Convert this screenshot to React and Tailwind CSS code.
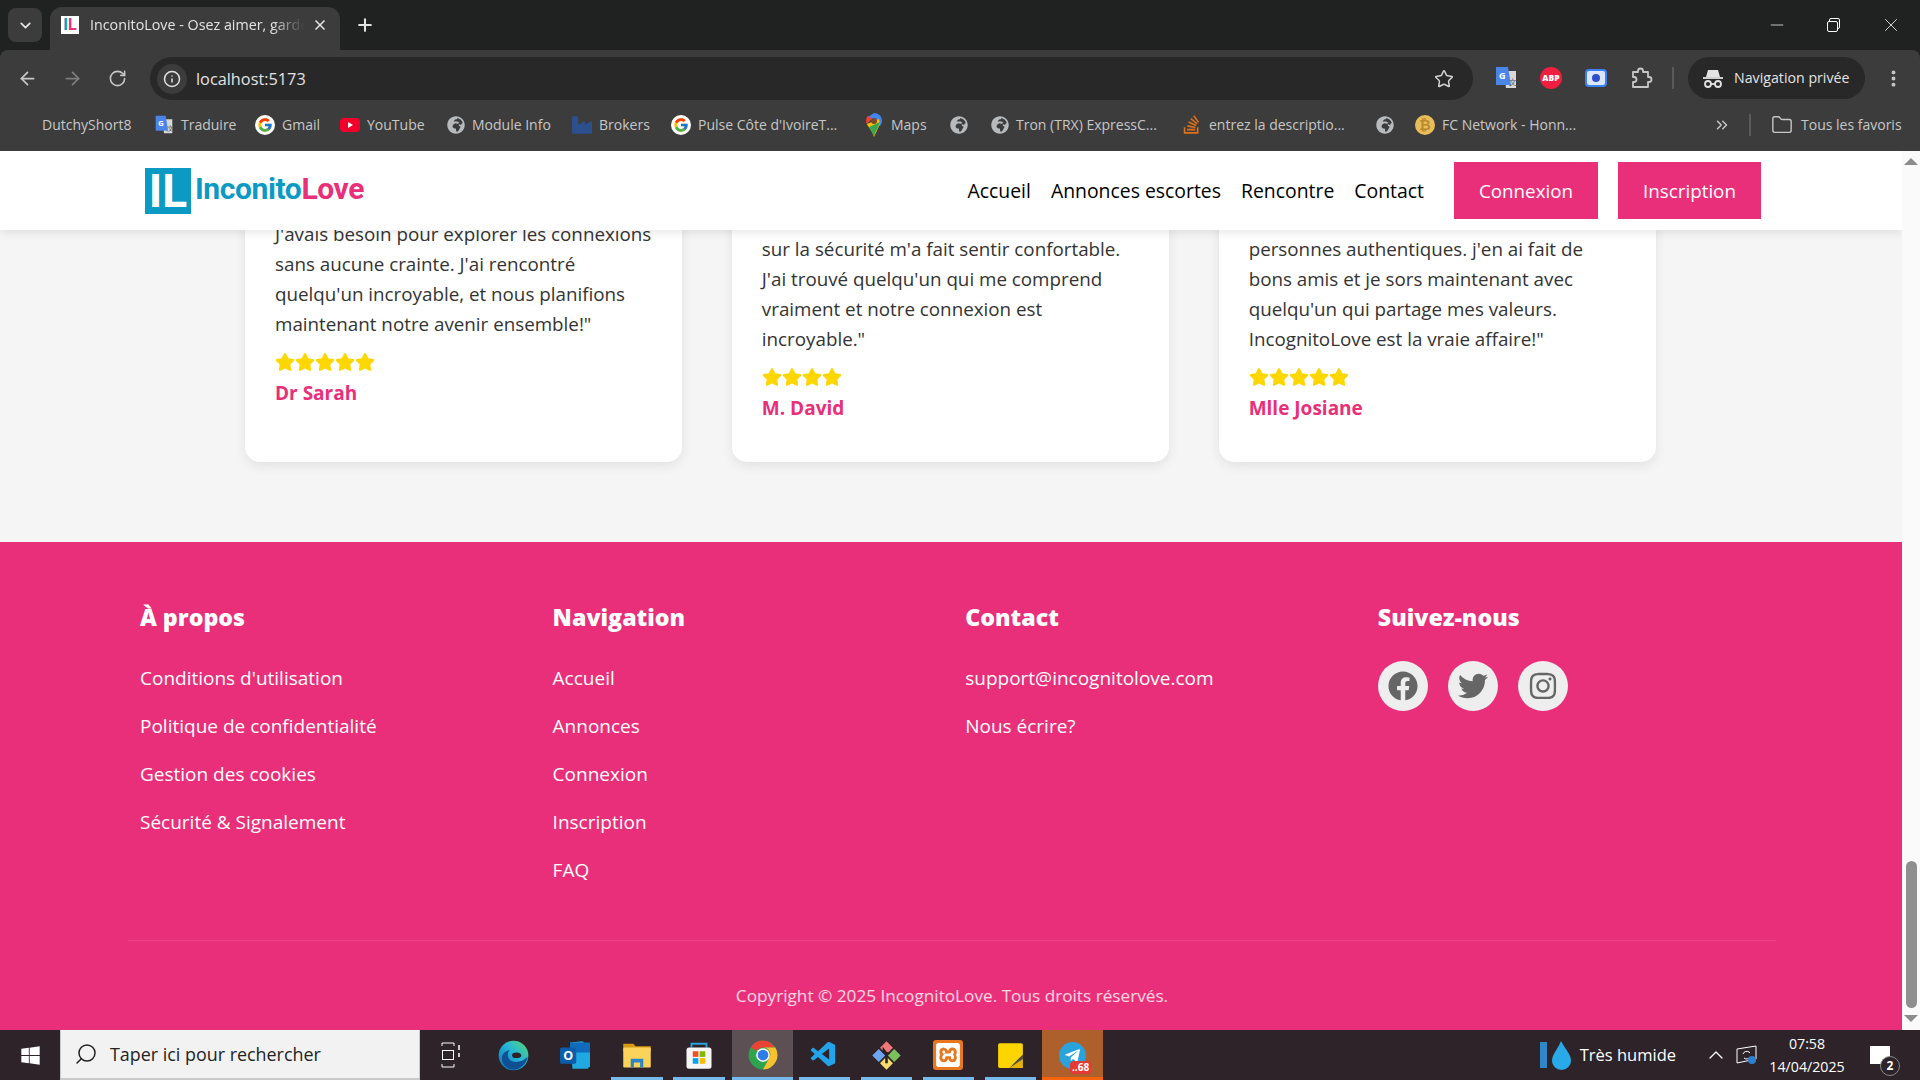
import React from "react";
import {
  ArrowLeft, ArrowRight, RotateCw, Info, X, Plus, ChevronDown, ChevronUp, Star,
  EllipsisVertical, ChevronsRight, Folder, Search, Minus,
} from "lucide-react";
import { FcGoogle } from "react-icons/fc";
import {
  FaFacebook, FaTwitter, FaInstagram, FaStar, FaGlobeAfrica, FaIndustry,
  FaStackOverflow, FaTelegramPlane, FaWindows,
} from "react-icons/fa";
import { SiXampp } from "react-icons/si";
import { VscVscode } from "react-icons/vsc";

const PINK = "bg-[#e92f79]";

// ---- petites icones dessinées ----
const Translate = ({ s = 22 }) => (
  <svg width={s} height={s} viewBox="0 0 24 24">
    <path d="M10 5h12v17H12z" fill="#d8d8d8" />
    <path d="M2 1h12l3 18H2z" fill="#4a85e8" />
    <text x="5" y="13" fontSize="9" fontWeight="700" fill="#fff" fontFamily="Open Sans">G</text>
    <text x="15" y="19" fontSize="8" fill="#555" fontFamily="Open Sans">文</text>
  </svg>
);

const GoogleDot = () => (
  <span className="flex h-[20px] w-[20px] items-center justify-center rounded-full bg-white">
    <FcGoogle size={16} />
  </span>
);

const YoutubeIcon = () => (
  <svg width="20" height="20" viewBox="0 0 20 20">
    <rect x="0" y="3" width="20" height="14" rx="4" fill="#f0002a" />
    <path d="M8 7l5 3-5 3z" fill="#fff" />
  </svg>
);

const BitcoinIcon = () => (
  <span className="flex h-[20px] w-[20px] items-center justify-center rounded-full bg-[#e8bd5a] text-[14px] font-bold leading-none text-[#b98a2c]">
    ₿
  </span>
);

const MapsPin = () => (
  <svg width="20" height="24" viewBox="0 0 20 24">
    <path d="M10 0a8 8 0 0 1 8 8c0 2-1 3.500-2 5L4 4z" fill="#4285f4" />
    <path d="M4 2.500A8 8 0 0 0 2 8c0 1 .3 2 .8 3L8 6z" fill="#ea4335" />
    <path d="M2.800 11 15 6l1 5-6 13c-1-5-5-9-7.200-13z" fill="#fbbc04" />
    <path d="M5 14 16 9c-1 5-5 9-6 15-1-4-3-7-5-10z" fill="#34a853" />
    <circle cx="10" cy="8" r="3" fill="#7a4a20" />
  </svg>
);

const Incognito = () => (
  <svg width="24" height="24" viewBox="0 0 24 24" fill="none" stroke="#e3e3e3" strokeWidth="1.800">
    <path d="M7 4h10l2 7H5z" fill="#e3e3e3" stroke="none" />
    <path d="M2 12h20" />
    <circle cx="7" cy="18" r="3" />
    <circle cx="17" cy="18" r="3" />
    <path d="M10 18h4" />
  </svg>
);

const PuzzleIcon = () => (
  <svg width="24" height="24" viewBox="0 0 24 24" fill="none" stroke="#c7c7c7" strokeWidth="1.800" strokeLinejoin="round">
    <path d="M4 6h5V5a2.500 2.500 0 0 1 5 0v1h5v5h1a2.500 2.500 0 0 1 0 5h-1v5H4v-5h1a2.500 2.500 0 0 0 0-5H4z" />
  </svg>
);

const TaskView = () => (
  <svg width="20" height="26" viewBox="0 0 20 26" fill="none" stroke="#fff" strokeWidth="1">
    <path d="M1 1h12M13 1v3M1 1v3" />
    <rect x="1.500" y="8.500" width="11" height="9" />
    <path d="M1 25h12M13 22v3M1 22v3" />
    <path d="M18 3v5M18 11v4" strokeWidth="1.500" />
  </svg>
);

const NetworkIcon = () => (
  <svg width="22" height="20" viewBox="0 0 22 20" fill="none" stroke="#fff" strokeWidth="1">
    <path d="M1 4 20 1v13L1 18z" />
    <path d="M7 9a4 4 0 0 1 6-2l1 1M14 12a4 4 0 0 1-6 1" />
    <circle cx="16" cy="15" r="4" fill="#2f7fd1" stroke="none" />
  </svg>
);

const ChromeLogo = () => (
  <svg width="30" height="30" viewBox="0 0 24 24">
    <circle cx="12" cy="12" r="11.500" fill="#2ea44f" />
    <path d="M2.470 6.500A11 11 0 0 1 21.530 6.500H12A5.500 5.500 0 0 0 7.240 9.250Z" fill="#ea4335" transform="translate(-.2 -.5)" />
    <path d="M21.800 6A11.500 11.500 0 0 1 12 23.500L16.760 14.750A5.500 5.500 0 0 0 12 6Z" fill="#fbc02d" />
    <circle cx="12" cy="12" r="5.500" fill="#fff" />
    <circle cx="12" cy="12" r="4.300" fill="#2f7be8" />
  </svg>
);

const EdgeLogo = () => (
  <svg width="31" height="31" viewBox="0 0 24 24">
    <defs>
      <linearGradient id="edgeGrad" x1="0" y1="1" x2="1" y2="0">
        <stop offset="0" stopColor="#0c6fb8" />
        <stop offset="0.550" stopColor="#25b5d8" />
        <stop offset="1" stopColor="#5fd86a" />
      </linearGradient>
    </defs>
    <circle cx="12" cy="12" r="11.500" fill="url(#edgeGrad)" />
    <path d="M23 13c-1 6-6 10-11 10-5 0-9-4-9-9 0-3 3-6 6-6-2 2-2 6 1 8 4 2 9 1 13-3z" fill="#0f4f93" />
    <path d="M12 10c3-1 6 0 6 2s-3 2-5 2-3-3-1-4z" fill="#2d2328" />
  </svg>
);

const OutlookLogo = () => (
  <svg width="30" height="30" viewBox="0 0 24 24">
    <path d="M8 2 18 1l6 6v14l-2 2H10z" fill="#20a8e0" />
    <path d="M8 2h16v8H8z" fill="#0f6cbd" />
    <rect x="0" y="6" width="13" height="13" rx="1.500" fill="#0b5cab" />
    <text x="2.500" y="16" fontSize="10" fontWeight="700" fill="#fff" fontFamily="Open Sans">O</text>
  </svg>
);

const ExplorerLogo = () => (
  <svg width="30" height="30" viewBox="0 0 24 24">
    <path d="M1 3h8l2 2h12v4H1z" fill="#d99a13" />
    <rect x="1" y="6" width="22" height="16" rx="1" fill="#fbd35a" />
    <path d="M7 15h10v7h-2.500v-4h-5v4H7z" fill="#2a86c8" />
  </svg>
);

const StoreLogo = () => (
  <svg width="30" height="30" viewBox="0 0 24 24">
    <path d="M6 6V3h12v3" fill="none" stroke="#2aa3e0" strokeWidth="1.500" />
    <rect x="2" y="6" width="20" height="17" rx="2" fill="#f5f5f5" />
    <rect x="7" y="9" width="4.500" height="4.500" fill="#f25022" />
    <rect x="12.500" y="9" width="4.500" height="4.500" fill="#7fba00" />
    <rect x="7" y="14.500" width="4.500" height="4.500" fill="#00a4ef" />
    <rect x="12.500" y="14.500" width="4.500" height="4.500" fill="#ffb900" />
  </svg>
);

const GitLogo = () => (
  <svg width="31" height="31" viewBox="0 0 24 24">
    <path d="M12 1l5 5-5 5-5-5z" fill="#f0787a" />
    <path d="M18 7l5 5-5 5-5-5z" fill="#7cc05c" />
    <path d="M12 13l5 5-5 5-5-5z" fill="#f6dc6e" />
    <path d="M6 7l5 5-5 5-5-5z" fill="#6fa5f0" />
    <path d="M9 5l3 4 3 1-2 2 0 6h-2l0-6-2-3z" fill="#2a2124" />
  </svg>
);

const StickyLogo = () => (
  <svg width="27" height="27" viewBox="0 0 24 24">
    <rect x="1" y="1" width="22" height="22" rx="1.500" fill="#fcd500" />
    <path d="M23 11v12H11z" fill="#4a4a4a" />
    <path d="M23 23H11l12-8z" fill="#e8b200" />
  </svg>
);

// ---- données ----
const globe = <FaGlobeAfrica size={18} className="text-[#b8bbbe]" />;

const bookmarks = [
  { label: "DutchyShort8", w: "w-[91px]", ml: "ml-[42px]" },
  { icon: <Translate s={20} />, label: "Traduire", w: "w-[54px]", ml: "ml-[21px]" },
  { icon: <GoogleDot />, label: "Gmail", w: "w-[38px]", ml: "ml-[20px]" },
  { icon: <YoutubeIcon />, label: "YouTube", w: "w-[59px]", ml: "ml-[20px]" },
  { icon: globe, label: "Module Info", w: "w-[81px]", ml: "ml-[21px]" },
  { icon: <FaIndustry size={20} className="text-[#2e4f8e]" />, label: "Brokers", w: "w-[50px]", ml: "ml-[19px]" },
  { icon: <GoogleDot />, label: "Pulse Côte d'IvoireT...", w: "w-[143px]", ml: "ml-[22px]" },
  { icon: <MapsPin />, label: "Maps", w: "w-[37px]", ml: "ml-[23px]" },
  { icon: globe, label: "", w: "w-0", ml: "ml-[22px]" },
  { icon: globe, label: "Tron (TRX) ExpressC...", w: "w-[142px]", ml: "ml-[23px]" },
  { icon: <FaStackOverflow size={21} className="text-[#e0701a]" />, label: "entrez la descriptio...", w: "w-[138px]", ml: "ml-[23px]" },
  { icon: globe, label: "", w: "w-0", ml: "ml-[29px]" },
  { icon: <BitcoinIcon />, label: "FC Network - Honn...", w: "w-[140px]", ml: "ml-[21px]" },
];

const testimonials = [
  {
    lines: [
      "J'avais besoin pour explorer les connexions",
      "sans aucune crainte. J'ai rencontré",
      "quelqu'un incroyable, et nous planifions",
      "maintenant notre avenir ensemble!\"",
    ],
    stars: 5,
    name: "Dr Sarah",
  },
  {
    lines: [
      "l'engagement de la plateforme",
      "sur la sécurité m'a fait sentir confortable.",
      "J'ai trouvé quelqu'un qui me comprend",
      "vraiment et notre connexion est",
      "incroyable.\"",
    ],
    stars: 4,
    name: "M. David",
  },
  {
    lines: [
      "j'ai pu enfin rencontrer de vraies",
      "personnes authentiques. j'en ai fait de",
      "bons amis et je sors maintenant avec",
      "quelqu'un qui partage mes valeurs.",
      "IncognitoLove est la vraie affaire!\"",
    ],
    stars: 5,
    name: "Mlle Josiane",
  },
];

const footerCols = [
  { title: "À propos", links: ["Conditions d'utilisation", "Politique de confidentialité", "Gestion des cookies", "Sécurité & Signalement"] },
  { title: "Navigation", links: ["Accueil", "Annonces", "Connexion", "Inscription", "FAQ"] },
  { title: "Contact", links: ["support@incognitolove.com", "Nous écrire?"] },
];

const taskIcons = [
  { icon: <EdgeLogo />, bar: false },
  { icon: <OutlookLogo />, bar: false },
  { icon: <ExplorerLogo />, bar: true },
  { icon: <StoreLogo />, bar: true },
];

const taskIcons2 = [
  { icon: <VscVscode size={30} className="text-[#23a3ea]" /> },
  { icon: <GitLogo /> },
  {
    icon: (
      <span className="flex h-[30px] w-[30px] items-center justify-center rounded-[3px] bg-[#e8781f]">
        <SiXampp size={24} className="text-white" />
      </span>
    ),
  },
  { icon: <StickyLogo /> },
];

function BrowserChrome() {
  return (
    <div className="bg-[#202221] font-['Open_Sans',sans-serif] text-[#e3e3e3]">
      {/* onglets */}
      <div className="flex h-[50px] items-start">
        <div className="ml-[8px] mt-[8px] flex h-[34px] w-[34px] items-center justify-center rounded-lg bg-[#3c3c3c]">
          <ChevronDown size={17} strokeWidth={2.500} />
        </div>
        <div className="ml-[8px] mt-[7px] flex h-[43px] w-[290px] items-center rounded-t-xl bg-[#3c3c3c] pb-[7px] pl-[11px]">
          <div className="flex h-[18px] w-[18px] items-center justify-center bg-white font-['Roboto',sans-serif] text-[16px] font-bold leading-none">
            <span className="text-[#0b9ac4]">I</span>
            <span className="text-[#e92f79]">L</span>
          </div>
          <div className="ml-[11px] w-[214px] overflow-hidden whitespace-nowrap text-[14.3px] text-[#e3e3e3] [mask-image:linear-gradient(to_right,black_85%,transparent)]">
            InconitoLove - Osez aimer, garder
          </div>
          <X size={16} strokeWidth={2.500} className="ml-[8px]" />
        </div>
        <Plus size={20} strokeWidth={2.500} className="ml-[15px] mt-[15px]" />
        <div className="ml-auto mt-[14px] flex items-center">
          <Minus size={20} strokeWidth={1} className="mr-[40px]" />
          <div className="relative mr-[39px] h-[14px] w-[14px]">
            <div className="absolute left-[2px] top-0 h-[11px] w-[11px] rounded-[2px] border border-white" />
            <div className="absolute bottom-0 left-0 h-[11px] w-[11px] rounded-[2px] border border-white bg-[#202221]" />
          </div>
          <X size={22} strokeWidth={1} className="mr-[18px]" />
        </div>
      </div>

      {/* barre d'adresse */}
      <div className="flex h-[50px] items-start rounded-t-lg bg-[#3c3c3c] pt-[7px]">
        <ArrowLeft size={21} className="ml-[17px] mt-[11px] text-[#c7c7c7]" />
        <ArrowRight size={21} className="ml-[24px] mt-[11px] text-[#7d7d7d]" />
        <RotateCw size={19} className="ml-[25px] mt-[12px] text-[#c7c7c7]" />
        <div className="ml-[23px] flex h-[43px] w-[1323px] items-center rounded-full bg-[#282828] pl-[7px]">
          <div className="flex h-[30px] w-[30px] items-center justify-center rounded-full bg-[#3c3c3c]">
            <Info size={18} />
          </div>
          <span className="ml-[9px] pt-[2px] text-[16.3px] text-[#e3e3e3]">localhost:5173</span>
          <Star size={20} strokeWidth={1.800} className="ml-auto mr-[19px] text-[#d0d0d0]" />
        </div>
        <div className="ml-[21px] mt-[9px] flex items-center">
          <Translate s={24} />
          <div className="ml-[22px] flex h-[22px] w-[22px] items-center justify-center rounded-full bg-[#f01f3f] text-[8.500px] font-extrabold text-white">
            ABP
          </div>
          <div className="ml-[23px] flex h-[18px] w-[22px] items-center justify-center rounded-[4px] border-2 border-[#3b82f6] bg-[#dbe7ff]">
            <span className="h-[8px] w-[8px] rounded-full bg-[#2b50c8]" />
          </div>
          <div className="ml-[22px]"><PuzzleIcon /></div>
          <div className="ml-[19px] h-[22px] w-[2px] bg-[#5a5a5a]" />
        </div>
        <div className="ml-[14px] flex h-[42px] w-[177px] items-center rounded-full bg-[#282828] pl-[13px]">
          <Incognito />
          <span className="ml-[9px] whitespace-nowrap text-[14.2px] text-[#e3e3e3]">Navigation privée</span>
        </div>
        <EllipsisVertical size={21} strokeWidth={2.500} className="ml-[18px] mt-[11px] text-[#c7c7c7]" />
      </div>

      {/* favoris */}
      <div className="flex h-[51px] items-center bg-[#3c3c3c] pb-[2px] text-[14px] text-[#c7c7c7]">
        {bookmarks.map((b, i) => (
          <div key={i} className={`flex items-center gap-[7px] ${b.ml}`}>
            {b.icon}
            {b.label && <span className={`${b.w} whitespace-nowrap`}>{b.label}</span>}
          </div>
        ))}
        <ChevronsRight size={18} className="ml-[131px] text-[#c7c7c7]" />
        <div className="ml-[18px] h-[22px] w-[2px] bg-[#5a5a5a]" />
        <Folder size={22} strokeWidth={1.500} className="ml-[20px] text-[#c7c7c7]" />
        <span className="ml-[8px] whitespace-nowrap">Tous les favoris</span>
      </div>
    </div>
  );
}

function Header() {
  return (
    <header className="absolute left-0 right-0 top-0 z-10 flex h-[79px] items-center bg-white pl-[145px] pr-[141px] shadow-[0_2px_10px_rgba(0,0,0,0.1)]">
      <div className="flex h-[46px] w-[46px] items-center justify-center bg-[#0b9ac4] font-['Roboto',sans-serif] text-[46px] font-bold leading-none text-white">
        IL
      </div>
      <div className="mb-[5px] ml-[4px] font-['Roboto',sans-serif] text-[30px] font-bold tracking-[-0.4px]">
        <span className="text-[#0b9ac4]">Inconito</span>
        <span className="text-[#e92f79]">Love</span>
      </div>
      <nav className="ml-auto flex items-center gap-[20px] pt-[1px] text-[19.4px] font-medium text-black">
        <a>Accueil</a>
        <a>Annonces escortes</a>
        <a>Rencontre</a>
        <a>Contact</a>
      </nav>
      <button className={`ml-[30px] h-[57px] w-[144px] ${PINK} pt-[1px] text-[18.8px] text-white`}>Connexion</button>
      <button className={`ml-[20px] h-[57px] w-[143px] ${PINK} pt-[1px] text-[18.8px] text-white`}>Inscription</button>
    </header>
  );
}

function Testimonial({ lines, stars, name }) {
  return (
    <div className="flex flex-col justify-center rounded-[15px] bg-white pb-[39px] pl-[30px] pr-[20px] pt-[30px] shadow-[0_4px_12px_rgba(0,0,0,0.08)]">
      <div className="text-[18.8px] leading-[30px] text-[#333]">
        {lines.map((l) => (
          <div key={l} className="whitespace-nowrap">{l}</div>
        ))}
      </div>
      <div className="mt-[13px] flex h-[20px] items-center">
        {Array.from({ length: stars }).map((_, i) => (
          <FaStar key={i} size={20} className="text-[#ffd700]" />
        ))}
      </div>
      <div className="mt-[6px] text-[19px] font-bold leading-[30px] text-[#e92f79]">{name}</div>
    </div>
  );
}

function Footer() {
  return (
    <footer className={`${PINK} flex-1 pl-[128px] pr-[126px] pt-[59px] text-white`}>
      <div className="grid h-[340px] grid-cols-[repeat(4,412.6px)] border-b border-white/10">
        {footerCols.map((c) => (
          <div key={c.title} className="px-3">
            <h3 className="text-[23.2px] font-black leading-[32px]">{c.title}</h3>
            <ul className="mt-[30px] space-y-[18px] text-[19px] leading-[30px]">
              {c.links.map((l) => (
                <li key={l}>{l}</li>
              ))}
            </ul>
          </div>
        ))}
        <div className="px-3">
          <h3 className="text-[23.2px] font-black leading-[32px]">Suivez-nous</h3>
          <div className="mt-[28px] flex gap-[20px]">
            {[FaFacebook, FaTwitter, FaInstagram].map((Icon, i) => (
              <div key={i} className="flex h-[50px] w-[50px] items-center justify-center rounded-full bg-[#eeeeee] text-[#666]">
                <Icon size={30} />
              </div>
            ))}
          </div>
        </div>
      </div>
      <p className="mt-[40px] text-center text-[17.200px] leading-[30px] text-white/80">
        Copyright © 2025 IncognitoLove. Tous droits réservés.
      </p>
    </footer>
  );
}

function Scrollbar() {
  return (
    <div className="flex w-[18px] flex-col items-center bg-[#fafafa] pt-[7px]">
      <div className="h-0 w-0 border-x-[7px] border-b-[7px] border-x-transparent border-b-[#8c8c8c]" />
      <div className="mt-auto h-[147px] w-[11px] rounded-full bg-[#8f8f8f]" />
      <div className="mb-[8px] mt-[7px] h-0 w-0 border-x-[7px] border-t-[7px] border-x-transparent border-t-[#8c8c8c]" />
    </div>
  );
}

function Taskbar() {
  return (
    <div className="flex h-[50px] items-stretch bg-[#2d2328] font-['Open_Sans',sans-serif] text-white">
      <div className="flex w-[60px] items-center justify-center">
        <FaWindows size={21} />
      </div>
      <div className="flex w-[360px] items-center border-x border-b-2 border-[#c9c9c9] bg-[#f2f2f2] text-[#222]">
        <Search size={24} strokeWidth={1.500} className="ml-[13px] -scale-x-100" />
        <span className="ml-[12px] text-[17.900px]">Taper ici pour rechercher</span>
      </div>
      <div className="flex w-[62px] items-center justify-center">
        <TaskView />
      </div>
      {taskIcons.map((t, i) => (
        <div key={i} className="relative flex w-[62px] items-center justify-center">
          {t.icon}
          {t.bar && <span className="absolute bottom-0 left-[5px] right-[5px] h-[3px] bg-[#76b9ed]" />}
        </div>
      ))}
      <div className="relative ml-[2px] flex w-[61px] items-center justify-center bg-[#5c5054]">
        <ChromeLogo />
        <span className="absolute bottom-0 left-0 right-0 h-[3px] bg-[#76b9ed]" />
      </div>
      {taskIcons2.map((t, i) => (
        <div key={i} className="relative flex w-[62px] items-center justify-center">
          {t.icon}
          <span className="absolute bottom-0 left-[6px] right-[5px] h-[3px] bg-[#76b9ed]" />
        </div>
      ))}
      <div className="relative ml-[1px] flex w-[61px] items-center justify-center bg-[#ad5f2c]">
        <div className="flex h-[27px] w-[27px] items-center justify-center rounded-full bg-[#2aa3dd]">
          <FaTelegramPlane size={17} className="text-white" />
        </div>
        <span className="absolute bottom-[6px] left-[28px] rounded-[4px] bg-[#e53935] px-[2px] text-[10px] font-bold leading-[13px]">..68</span>
        <span className="absolute bottom-0 left-0 right-0 h-[3px] bg-[#f7630c]" />
      </div>

      {/* zone de notification */}
      <div className="ml-auto flex items-center">
        <svg width="32" height="30" viewBox="0 0 32 30">
          <rect x="0" y="2" width="7" height="26" fill="#2f86c9" />
          <path d="M21 1c4 8 10 13 10 20a9.500 9 0 0 1-19 0c0-7 6-12 9-20z" fill="#29a9e8" />
        </svg>
        <span className="ml-[8px] text-[16.500px]">Très humide</span>
        <ChevronUp size={24} strokeWidth={1.300} className="ml-[28px]" />
        <div className="ml-[8px]"><NetworkIcon /></div>
        <div className="ml-[5px] w-[88px] text-center text-[14.200px] leading-[23px]">
          <div>07:58</div>
          <div>14/04/2025</div>
        </div>
        <div className="relative ml-[19px] mr-[30px] h-[18px] w-[20px] bg-white">
          <span className="absolute -bottom-[12px] -right-[10px] flex h-[20px] w-[20px] items-center justify-center rounded-full border border-[#888] bg-[#2d2328] text-[12px] font-bold">2</span>
        </div>
      </div>
    </div>
  );
}

export default function App() {
  return (
    <div className="flex h-screen flex-col overflow-hidden font-['Open_Sans',sans-serif]">
      <BrowserChrome />
      <div className="flex min-h-0 flex-1">
        <div className="relative flex min-w-0 flex-1 flex-col overflow-hidden">
          <Header />
          <section className="grid grid-cols-3 gap-[49.5px] bg-[#f5f5f5] pb-[80px] pl-[245px] pr-[246px] pt-[23px]">
            {testimonials.map((t) => (
              <Testimonial key={t.name} {...t} />
            ))}
          </section>
          <Footer />
        </div>
        <Scrollbar />
      </div>
      <Taskbar />
    </div>
  );
}
